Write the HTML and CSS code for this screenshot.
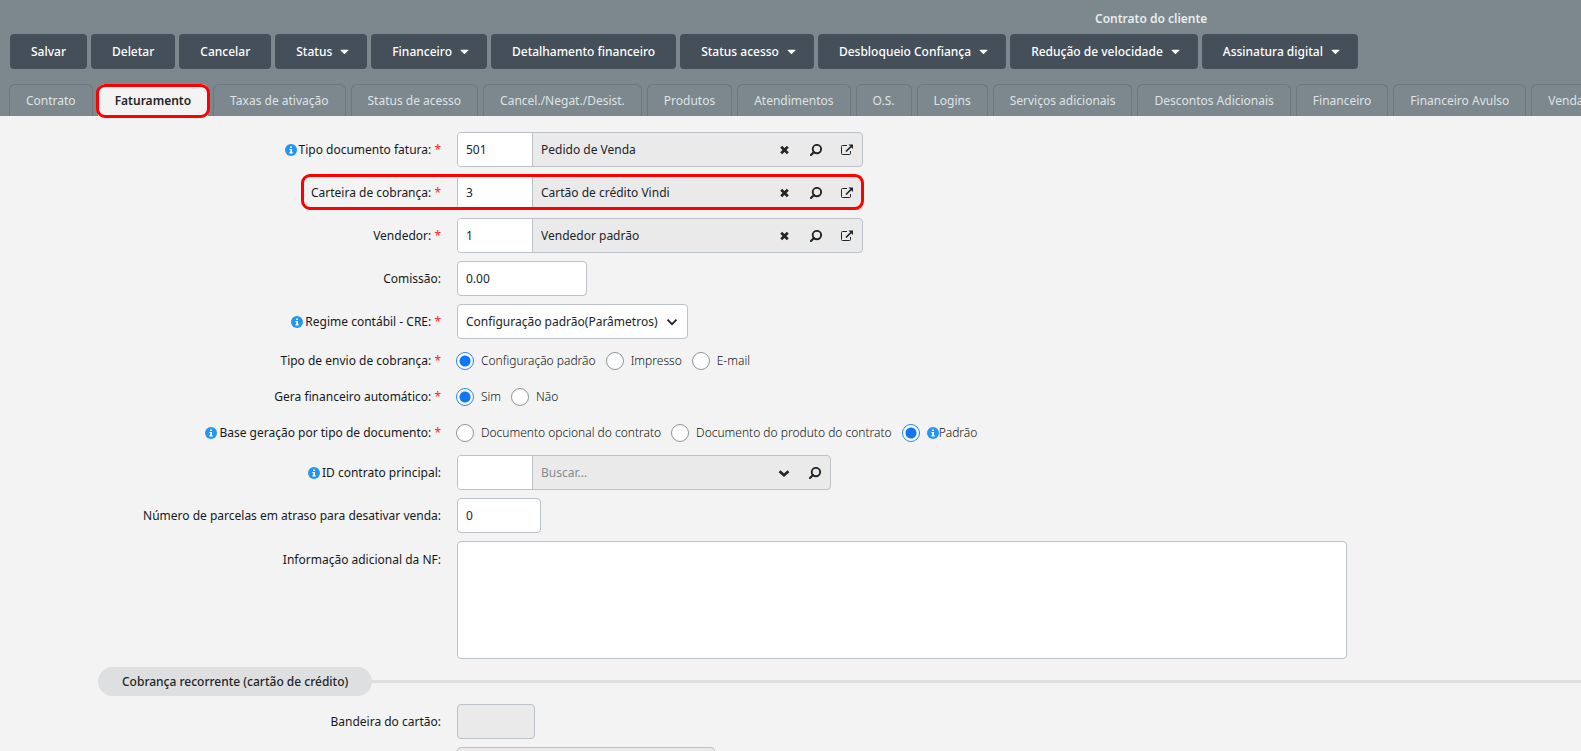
FILE: index.html
```html
<!DOCTYPE html>
<html lang="pt-BR">
<head>
<meta charset="utf-8">
<title>Contrato do cliente</title>
<link rel="stylesheet" href="styles.css">
</head>
<body>
<svg class="sprite" aria-hidden="true">
  <symbol id="caret" viewBox="0 0 10 6"><path d="M1 0.5h8q.7.3.2.9L5.6 5q-.6.5-1.2 0L.8 1.4Q.3.8 1 .5z" fill="currentColor"/></symbol>
  <symbol id="info" viewBox="0 0 12 12"><circle cx="6" cy="6" r="6" fill="#2196f3"/><path d="M5 2.4h2v1.5H5zM4.4 4.9H7v3.3h.7v1.2H4.4V8.200h.8V6.100h-.8z" fill="#fff"/></symbol>
  <symbol id="clear" viewBox="0 0 12 12"><path d="M2.200 2.700l6.600 6.600M8.800 2.700l-6.600 6.600" stroke="currentColor" stroke-width="2.700" fill="none"/></symbol>
  <symbol id="search" viewBox="0 0 12 12"><circle cx="6.900" cy="5.100" r="4.200" stroke="currentColor" stroke-width="1.900" fill="none"/><path d="M4 8L1 11" stroke="currentColor" stroke-width="2.200" stroke-linecap="round"/></symbol>
  <symbol id="open" viewBox="0 0 14 12"><path d="M7 1.500H2.500Q1.500 1.500 1.500 2.500v7Q1.500 10.500 2.500 10.500h7q1 0 1-1V7" stroke="currentColor" stroke-width="1" fill="none"/><path d="M6 7.500L11 2.500" stroke="currentColor" stroke-width="1.700"/><path d="M8.500.5H13V5z" fill="currentColor"/></symbol>
  <symbol id="chevron" viewBox="0 0 12 12"><path d="M1.500 3.700L6 8.200l4.500-4.500" stroke="currentColor" stroke-width="1.800" fill="none"/></symbol>
  <symbol id="chevron-bold" viewBox="0 0 12 12"><path d="M1.500 4.200L6 8.200l4.500-4" stroke="currentColor" stroke-width="2.700" fill="none"/></symbol>
</svg>

<header class="header">
  <h1 class="title">Contrato do cliente</h1>
  <div class="toolbar">
    <button class="btn" type="button">Salvar</button>
    <button class="btn" type="button">Deletar</button>
    <button class="btn" type="button">Cancelar</button>
    <button class="btn btn-menu" type="button">Status<svg class="caret"><use href="#caret"/></svg></button>
    <button class="btn btn-menu" type="button">Financeiro<svg class="caret"><use href="#caret"/></svg></button>
    <button class="btn" type="button">Detalhamento financeiro</button>
    <button class="btn btn-menu" type="button">Status acesso<svg class="caret"><use href="#caret"/></svg></button>
    <button class="btn btn-menu" type="button">Desbloqueio Confiança<svg class="caret"><use href="#caret"/></svg></button>
    <button class="btn btn-menu" type="button">Redução de velocidade<svg class="caret"><use href="#caret"/></svg></button>
    <button class="btn btn-menu" type="button">Assinatura digital<svg class="caret"><use href="#caret"/></svg></button>
  </div>
  <nav class="tabs">
    <a class="tab" href="#">Contrato</a>
    <a class="tab active" href="#">Faturamento</a>
    <a class="tab" href="#">Taxas de ativação</a>
    <a class="tab" href="#">Status de acesso</a>
    <a class="tab" href="#">Cancel./Negat./Desist.</a>
    <a class="tab" href="#">Produtos</a>
    <a class="tab" href="#">Atendimentos</a>
    <a class="tab" href="#">O.S.</a>
    <a class="tab" href="#">Logins</a>
    <a class="tab" href="#">Serviços adicionais</a>
    <a class="tab" href="#">Descontos Adicionais</a>
    <a class="tab" href="#">Financeiro</a>
    <a class="tab" href="#">Financeiro Avulso</a>
    <a class="tab" href="#">Vendas</a>
  </nav>
</header>

<form class="form">
  <div class="row">
    <label class="label" for="tipo"><svg class="info"><use href="#info"/></svg>Tipo documento fatura: <span class="req">*</span></label>
    <div class="lookup">
      <input class="code" id="tipo" type="text" value="501">
      <input class="desc" type="text" value="Pedido de Venda" aria-label="Descrição do documento" readonly>
      <button class="act" type="button" aria-label="Limpar"><svg class="icon"><use href="#clear"/></svg></button>
      <button class="act" type="button" aria-label="Pesquisar"><svg class="icon"><use href="#search"/></svg></button>
      <button class="act" type="button" aria-label="Abrir"><svg class="icon icon-open"><use href="#open"/></svg></button>
    </div>
  </div>
  <div class="row marked">
    <label class="label" for="carteira">Carteira de cobrança: <span class="req">*</span></label>
    <div class="lookup">
      <input class="code" id="carteira" type="text" value="3">
      <input class="desc" type="text" value="Cartão de crédito Vindi" aria-label="Descrição da carteira" readonly>
      <button class="act" type="button" aria-label="Limpar"><svg class="icon"><use href="#clear"/></svg></button>
      <button class="act" type="button" aria-label="Pesquisar"><svg class="icon"><use href="#search"/></svg></button>
      <button class="act" type="button" aria-label="Abrir"><svg class="icon icon-open"><use href="#open"/></svg></button>
    </div>
  </div>
  <div class="row">
    <label class="label" for="vendedor">Vendedor: <span class="req">*</span></label>
    <div class="lookup">
      <input class="code" id="vendedor" type="text" value="1">
      <input class="desc" type="text" value="Vendedor padrão" aria-label="Nome do vendedor" readonly>
      <button class="act" type="button" aria-label="Limpar"><svg class="icon"><use href="#clear"/></svg></button>
      <button class="act" type="button" aria-label="Pesquisar"><svg class="icon"><use href="#search"/></svg></button>
      <button class="act" type="button" aria-label="Abrir"><svg class="icon icon-open"><use href="#open"/></svg></button>
    </div>
  </div>
  <div class="row">
    <label class="label" for="comissao">Comissão:</label>
    <input class="input w-money" id="comissao" type="text" value="0.00">
  </div>
  <div class="row">
    <label class="label" for="regime"><svg class="info"><use href="#info"/></svg>Regime contábil - CRE: <span class="req">*</span></label>
    <div class="select">
      <select class="input" id="regime"><option>Configuração padrão(Parâmetros)</option></select>
      <svg class="select-arrow"><use href="#chevron"/></svg>
    </div>
  </div>
  <div class="row row-radio" role="radiogroup" aria-labelledby="l-envio">
    <span class="label" id="l-envio">Tipo de envio de cobrança: <span class="req">*</span></span>
    <div class="radios">
      <label class="choice"><input class="radio" type="radio" name="envio" checked>Configuração padrão</label>
      <label class="choice"><input class="radio" type="radio" name="envio">Impresso</label>
      <label class="choice"><input class="radio" type="radio" name="envio">E-mail</label>
    </div>
  </div>
  <div class="row row-radio" role="radiogroup" aria-labelledby="l-auto">
    <span class="label" id="l-auto">Gera financeiro automático: <span class="req">*</span></span>
    <div class="radios">
      <label class="choice"><input class="radio" type="radio" name="auto" checked>Sim</label>
      <label class="choice"><input class="radio" type="radio" name="auto">Não</label>
    </div>
  </div>
  <div class="row row-radio" role="radiogroup" aria-labelledby="l-base">
    <span class="label" id="l-base"><svg class="info"><use href="#info"/></svg>Base geração por tipo de documento: <span class="req">*</span></span>
    <div class="radios">
      <label class="choice"><input class="radio" type="radio" name="base">Documento opcional do contrato</label>
      <label class="choice"><input class="radio" type="radio" name="base">Documento do produto do contrato</label>
      <label class="choice"><input class="radio" type="radio" name="base" checked><svg class="info flush"><use href="#info"/></svg>Padrão</label>
    </div>
  </div>
  <div class="row">
    <label class="label" for="principal"><svg class="info"><use href="#info"/></svg>ID contrato principal:</label>
    <div class="lookup lookup-short">
      <input class="code" id="principal" type="text">
      <input class="desc" type="text" placeholder="Buscar..." aria-label="Buscar contrato">
      <button class="act" type="button" aria-label="Listar"><svg class="icon"><use href="#chevron-bold"/></svg></button>
      <button class="act" type="button" aria-label="Pesquisar"><svg class="icon"><use href="#search"/></svg></button>
    </div>
  </div>
  <div class="row">
    <label class="label" for="parcelas">Número de parcelas em atraso para desativar venda:</label>
    <input class="input w-count" id="parcelas" type="text" value="0">
  </div>
  <div class="row row-area">
    <label class="label" for="nf">Informação adicional da NF:</label>
    <textarea class="input area" id="nf"></textarea>
  </div>
  <div class="section"><h2 class="pill">Cobrança recorrente (cartão de crédito)</h2></div>
  <div class="row">
    <label class="label" for="bandeira">Bandeira do cartão:</label>
    <input class="input w-brand" id="bandeira" type="text" disabled>
  </div>
  <div class="row">
    <span class="label"></span>
    <input class="input w-card" type="text" aria-label="Cartão" disabled>
  </div>
</form>
</body>
</html>
```

FILE: styles.css
```css
*, *::before, *::after { box-sizing: border-box; }

body {
  margin: 0;
  height: 100vh;
  overflow: hidden;
  background: #f3f3f3;
  color: #212529;
  font: 12px/18px "Noto Sans", "Open Sans", sans-serif;
}

button, input, select, textarea { font: inherit; color: inherit; }

.sprite { display: none; }

.header { background: #7c888d; color: #e9ecee; }

.title {
  margin: 0;
  padding: 10px 0 6px 1095px;
  font-size: 12px;
  line-height: 18px;
  font-weight: 600;
  white-space: nowrap;
}

.toolbar { display: flex; gap: 4px; padding: 0 10px; }

.btn {
  display: flex;
  align-items: center;
  flex: none;
  gap: 8px;
  height: 35px;
  padding: 0 21px;
  border: 0;
  border-radius: 4px;
  background: #454f5a;
  color: #fff;
  font-weight: 500;
  white-space: nowrap;
}

.btn-menu { padding-right: 18px; }

.caret { width: 9px; height: 6px; }

.tabs { display: flex; gap: 5px; padding: 15px 0 0 9px; }

.tab {
  position: relative;
  flex: none;
  height: 32px;
  padding: 7px 16px 0;
  border: 1px solid #6b787f;
  border-bottom: 0;
  border-radius: 6px 6px 0 0;
  color: #dfe3e5;
  text-decoration: none;
  white-space: nowrap;
}

.tab.active {
  border-color: #f3f3f3;
  background: #f3f3f3;
  color: #212529;
  font-weight: 600;
}

.tab.active::after {
  content: "";
  position: absolute;
  inset: -1px -3px -2px;
  border: 3px solid #f00;
  border-radius: 9px;
}

.form { display: flex; flex-direction: column; gap: 8px; padding-top: 16px; }

.row {
  position: relative;
  display: grid;
  grid-template-columns: 441px auto;
  column-gap: 16px;
  align-items: center;
  justify-content: start;
}

.row-radio { min-height: 28px; }

.label { text-align: right; white-space: nowrap; color: #16191c; }

.req { color: #f22; }

.info {
  width: 12px;
  height: 12px;
  margin-right: 2px;
  vertical-align: -2px;
}

.info.flush { margin-right: 0; }

.lookup {
  display: flex;
  align-items: center;
  width: 406px;
  height: 35px;
  border: 1px solid #bcc2c8;
  border-radius: 4px;
  background: #eaeaea;
  overflow: hidden;
}

.lookup-short { width: 374px; }

.code {
  width: 75px;
  height: 100%;
  padding: 0 8px;
  border: 0;
  border-right: 1px solid #bcc2c8;
  background: #fff;
}

.desc {
  flex: 1;
  min-width: 0;
  height: 100%;
  padding: 0 8px;
  border: 0;
  background: transparent;
}

.desc::placeholder { color: #868a8e; opacity: 1; }

.act {
  display: flex;
  align-items: center;
  justify-content: center;
  width: 31px;
  height: 100%;
  padding: 0;
  border: 0;
  background: transparent;
  color: #212529;
}

.icon { width: 12px; height: 12px; }

.icon-open { width: 14px; }

.marked::after {
  content: "";
  position: absolute;
  left: 301px;
  top: -1px;
  width: 563px;
  height: 36px;
  border: 3px solid #f00;
  border-radius: 9px;
}

.input {
  height: 35px;
  padding: 0 8px;
  border: 1px solid #bcc2c8;
  border-radius: 4px;
  background: #fff;
}

.input:disabled { background: #eaeaea; }

.w-money { width: 130px; }
.w-count { width: 84px; }
.w-brand { width: 78px; }
.w-card { width: 258px; }

.select { position: relative; width: 231px; }

.select .input { display: block; width: 100%; appearance: none; }

.select-arrow {
  position: absolute;
  right: 10px;
  top: 12px;
  width: 12px;
  height: 12px;
  pointer-events: none;
}

.radios { display: flex; gap: 10px; margin-left: -1px; }

.choice {
  display: flex;
  align-items: center;
  color: #101214;
  font-weight: 300;
  white-space: nowrap;
}

.radio {
  appearance: none;
  width: 18px;
  height: 18px;
  margin: 0 7px 0 0;
  border: 1px solid #8e959c;
  border-radius: 50%;
  background: #fff;
}

.radio:checked {
  border-color: #2684f5;
  background: radial-gradient(circle, #0d78f5 5px, #fff 6px);
}

.row-area { align-items: start; }

.row-area .label { padding-top: 10px; }

.area { display: block; width: 890px; height: 118px; resize: none; }

.section { display: flex; align-items: center; padding-left: 98px; }

.section::after { content: ""; flex: 1; height: 3px; background: #dddfe1; }

.pill {
  margin: 0;
  padding: 6px 24px 5px;
  border-radius: 15px;
  background: #dddfe1;
  color: #212529;
  font-size: 12px;
  line-height: 18px;
  font-weight: 500;
}
```
